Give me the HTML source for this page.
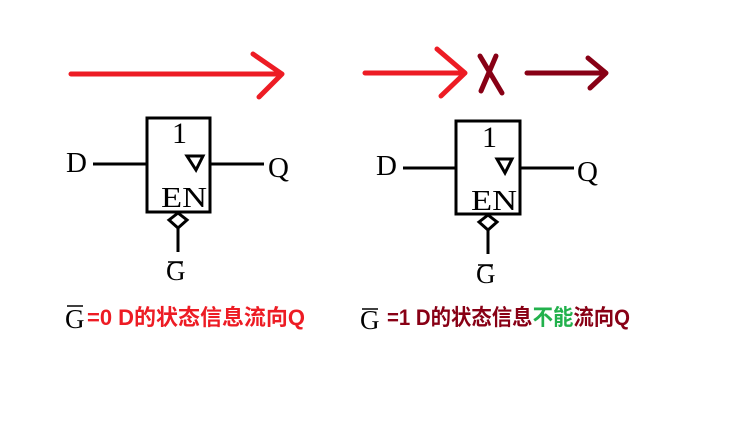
<html><body style="margin:0;background:#fff;width:740px;height:427px;overflow:hidden;position:relative">
<svg width="740" height="427" style="position:absolute;left:0;top:0" font-family="Liberation Serif, serif">
<g stroke="#ed1c24" stroke-width="5" fill="none" stroke-linecap="round" stroke-linejoin="round">
<path d="M71 74H282M253 54L282 74L259 97"/>
<path d="M365 73H464M437 49L465 73L441 96"/>
</g>
<g stroke="#880015" stroke-width="5" fill="none" stroke-linecap="round" stroke-linejoin="round">
<path d="M480 56L502 93M496 56L481 91"/>
<path d="M527 73H605M588 58L606 73L590 88"/>
</g>
<g stroke="#000" stroke-width="3" fill="none">
<rect x="147" y="118" width="63" height="94"/>
<path d="M93 164H147M210 164H264M178 228V252"/>
<path d="M169 220L178 213L187 220L178 228Z"/>
<path d="M187 156H203L196 170Z"/>
<rect x="456" y="121" width="64" height="93"/>
<path d="M403 168H456M520 168H574M488 230V254"/>
<path d="M479 222L488 215L497 222L488 230Z"/>
<path d="M497 159H512L505 173Z"/>
<path stroke-width="1.5" d="M168 262H183M478 265H493M67 306H83M362 309H378"/>
</g>
<g font-size="29" fill="#000">
<text x="66" y="172">D</text><text x="268" y="177">Q</text>
<text x="172" y="143" font-size="30">1</text><text x="161" y="207" font-size="28" textLength="46" lengthAdjust="spacingAndGlyphs">EN</text>
<text x="166" y="280" font-size="27">G</text>
<text x="376" y="175">D</text><text x="577" y="181">Q</text>
<text x="482" y="147" font-size="30">1</text><text x="471" y="210" font-size="28" textLength="46" lengthAdjust="spacingAndGlyphs">EN</text>
<text x="476" y="283" font-size="27">G</text>
<text x="65" y="328" font-size="27">G</text><text x="360" y="329" font-size="27">G</text>
</g>
<g font-family="Liberation Sans, Noto Sans CJK SC, sans-serif" font-weight="bold" font-size="22">
<text x="87" y="325" fill="#ed1c24" textLength="218" lengthAdjust="spacingAndGlyphs">=0 D的状态信息流向Q</text>
<text x="387" y="325" fill="#880015" textLength="243" lengthAdjust="spacingAndGlyphs">=1 D的状态信息<tspan fill="#22b14c">不能</tspan>流向Q</text>
</g>
</svg>
</body></html>
